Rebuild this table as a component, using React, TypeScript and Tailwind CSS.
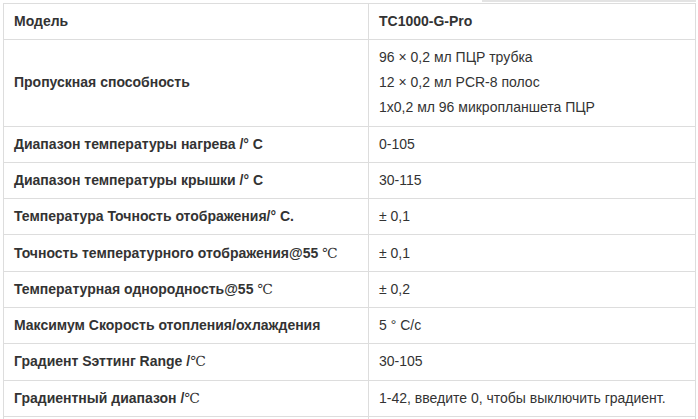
const rows: [string, React.ReactNode][] = [
  ["Диапазон температуры нагрева /° C", "0-105"],
  ["Диапазон температуры крышки /° C", "30-115"],
  ["Температура Точность отображения/° C.", "± 0,1"],
];

const C = () => <span className="font-normal font-['Liberation_Serif','DejaVu_Serif',serif]">℃</span>;

const App = () => {
  return (
    <div className="w-[698px] h-[419px] overflow-hidden bg-white font-['Liberation_Sans',Arial,sans-serif] text-[14px] text-[#333]">
      <div className="flex justify-end h-[3px]">
        <div className="w-[214px] h-[2px] bg-[#e3e3e3] mr-[2px]" />
      </div>
      <table className="ml-[3px] w-[693px] border-collapse border border-[#ddd]">
        <colgroup>
          <col className="w-[365px]" />
          <col />
        </colgroup>
        <tbody className="leading-[25px]">
          <tr>
            <td className="border border-[#ddd] px-[10px] py-[5.15px] font-bold">Модель</td>
            <td className="border border-[#ddd] px-[10px] py-[5.15px] font-bold">TC1000-G-Pro</td>
          </tr>
          <tr>
            <td className="border border-[#ddd] px-[10px] py-[5.15px] font-bold">Пропускная способность</td>
            <td className="border border-[#ddd] px-[10px] py-[5.15px]">
              <div>96 × 0,2 мл ПЦР трубка</div>
              <div>12 × 0,2 мл PCR-8 полос</div>
              <div>1x0,2 мл 96 микропланшета ПЦР</div>
            </td>
          </tr>
          {rows.map(([label, value]) => (
            <tr key={label}>
              <td className="border border-[#ddd] px-[10px] py-[5.15px] font-bold">{label}</td>
              <td className="border border-[#ddd] px-[10px] py-[5.15px]">{value}</td>
            </tr>
          ))}
          <tr>
            <td className="border border-[#ddd] px-[10px] py-[5.15px] font-bold">Точность температурного отображения@55 <C /></td>
            <td className="border border-[#ddd] px-[10px] py-[5.15px]">± 0,1</td>
          </tr>
          <tr>
            <td className="border border-[#ddd] px-[10px] py-[5.15px] font-bold">Температурная однородность@55 <C /></td>
            <td className="border border-[#ddd] px-[10px] py-[5.15px]">± 0,2</td>
          </tr>
          <tr>
            <td className="border border-[#ddd] px-[10px] py-[5.15px] font-bold">Максимум Скорость отопления/охлаждения</td>
            <td className="border border-[#ddd] px-[10px] py-[5.15px]">5 ° C/с</td>
          </tr>
          <tr>
            <td className="border border-[#ddd] px-[10px] py-[5.15px] font-bold">Градиент Sэттинг Range /<C /></td>
            <td className="border border-[#ddd] px-[10px] py-[5.15px]">30-105</td>
          </tr>
          <tr>
            <td className="border border-[#ddd] px-[10px] py-[5.15px] font-bold">Градиентный диапазон /<C /></td>
            <td className="border border-[#ddd] px-[10px] py-[5.15px]">1-42, введите 0, чтобы выключить градиент.</td>
          </tr>
          <tr>
            <td className="border border-[#ddd] px-[10px] py-[5.15px] font-bold">&nbsp;</td>
            <td className="border border-[#ddd] px-[10px] py-[5.15px]">&nbsp;</td>
          </tr>
        </tbody>
      </table>
    </div>
  );
};

export default App;
